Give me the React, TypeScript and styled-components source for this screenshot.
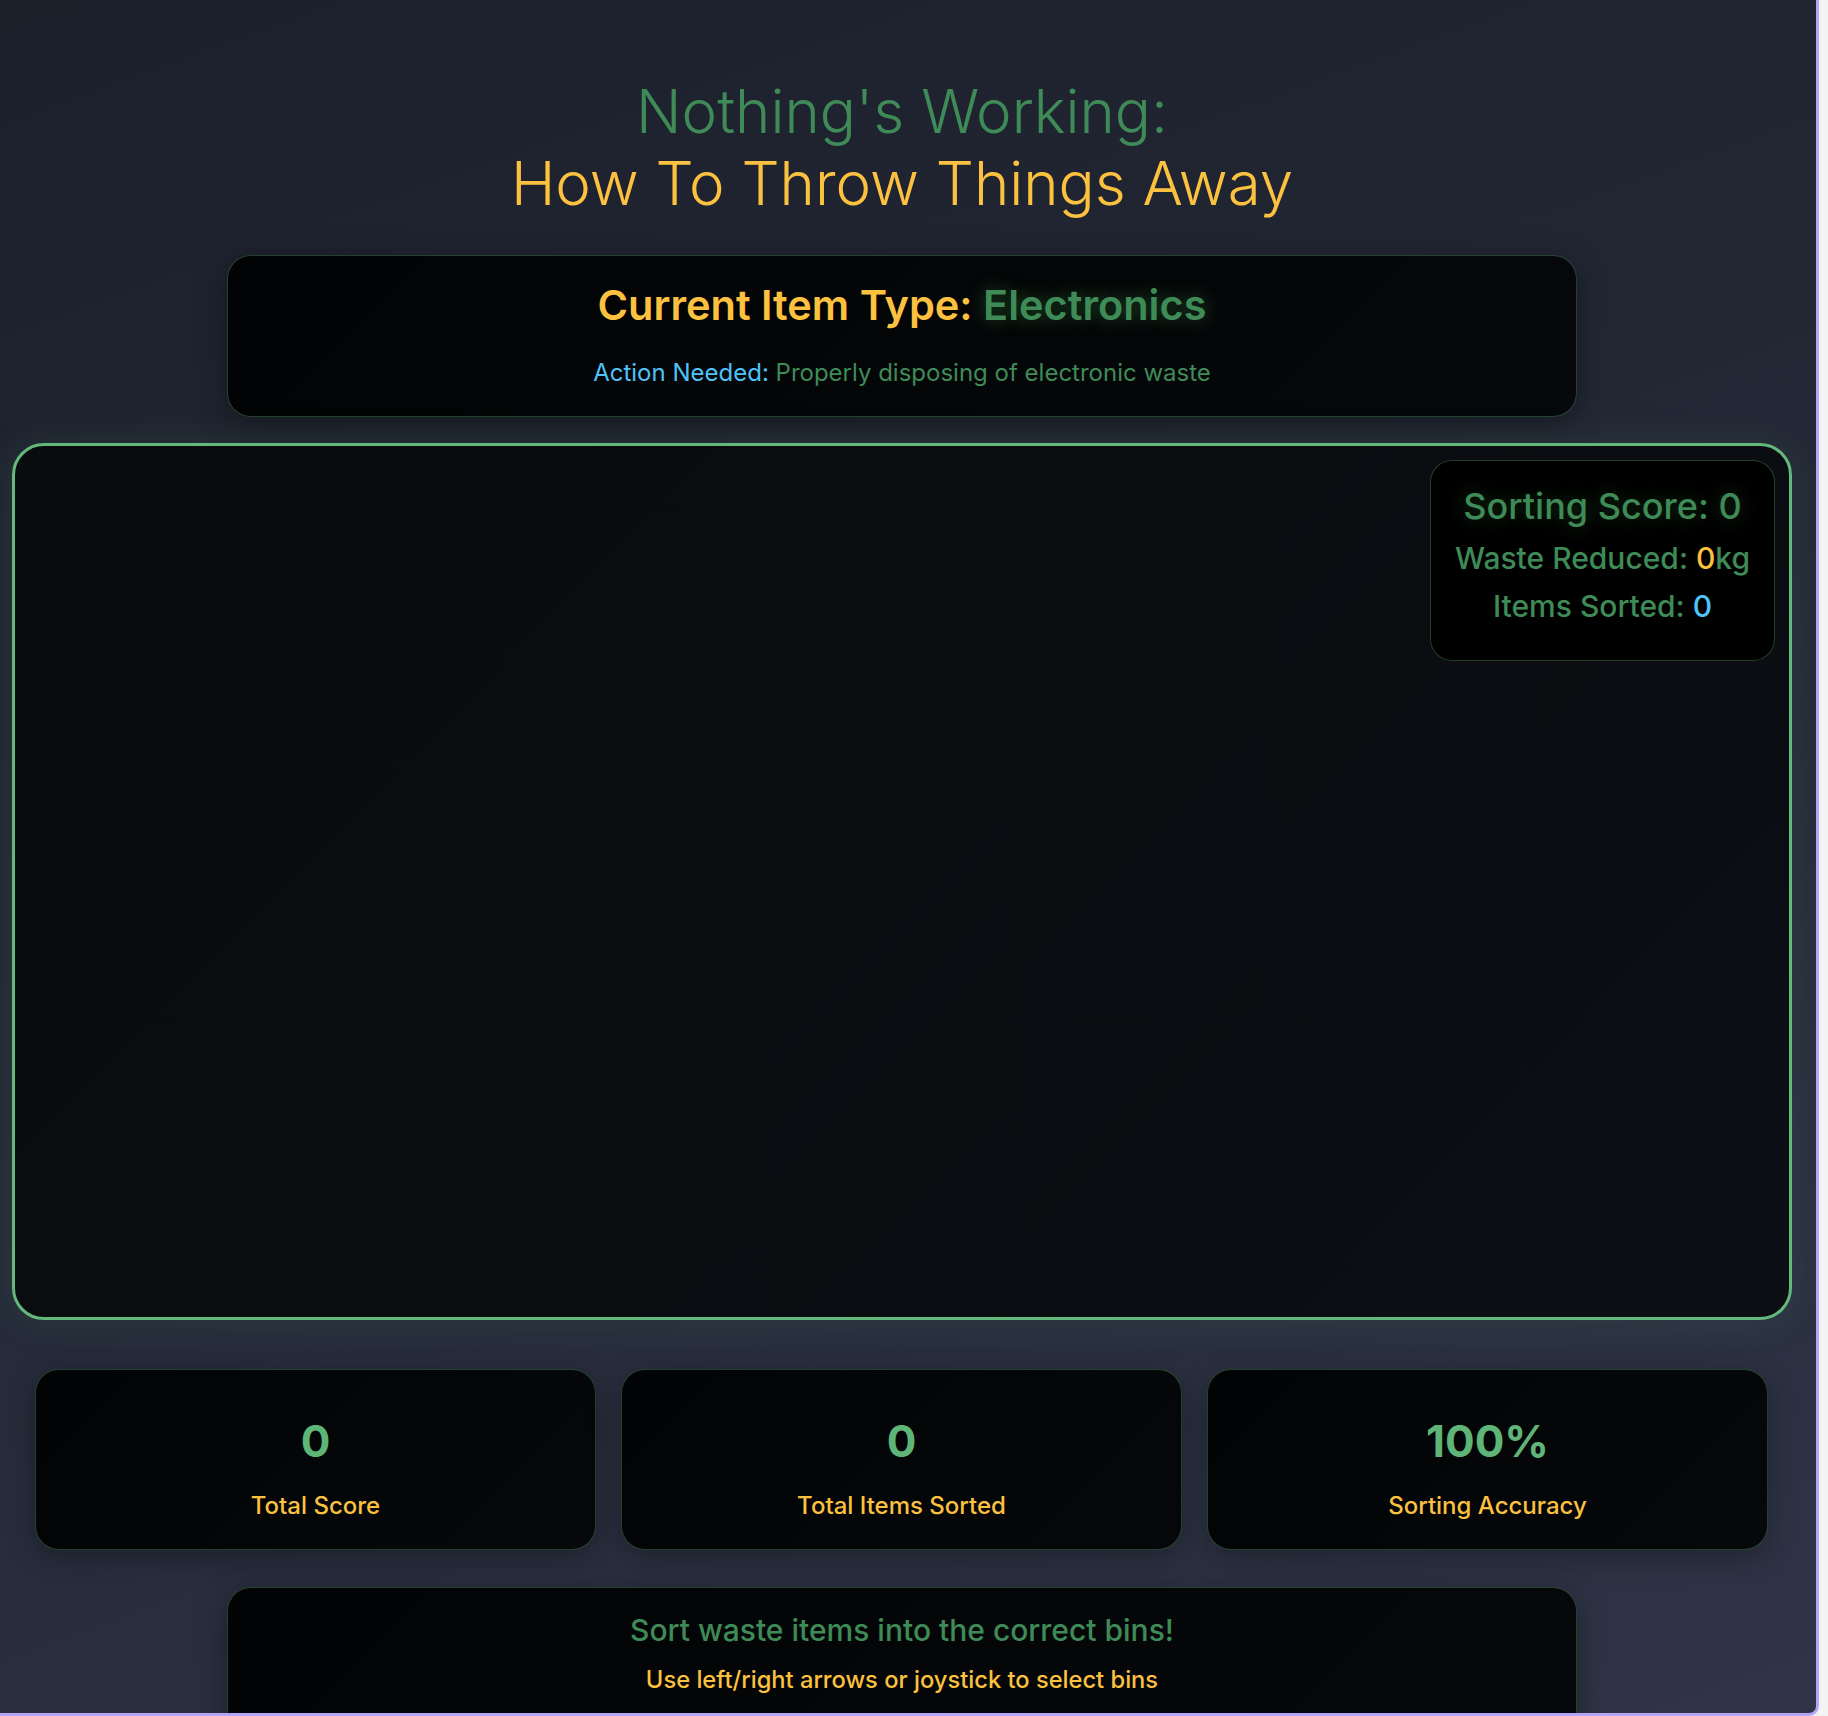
import React from "react";
import styled, { createGlobalStyle } from "styled-components";

const GREEN = "#3f8b57";
const GREEN_LIGHT = "#5fb477";
const YELLOW = "#fbc13f";
const BLUE = "#4fc3f7";
const FONT = `Inter, "Noto Sans", "Liberation Sans", sans-serif`;

const GlobalStyle = createGlobalStyle`
  html, body {
    margin: 0;
    padding: 0;
    background: #f3f3f3;
  }
  body {
    font-family: ${FONT};
  }
  * { box-sizing: border-box; }
`;

const Frame = styled.div`
  width: 1819px;
  height: 1716px;
  overflow: hidden;
  border-right: 3px solid #b3a6f8;
  border-bottom: 3px solid #b3a6f8;
  border-bottom-right-radius: 10px;
  background: linear-gradient(160deg, #1c202b 0%, #232836 45%, #2f3547 100%);
  padding: 0 24px 0 12px;
`;

const Column = styled.main`
  width: 1780px;
  display: flex;
  flex-direction: column;
  align-items: center;
  padding-top: 75px;
`;

const Title = styled.h1`
  margin: 0;
  font-family: ${FONT};
  font-weight: 300;
  font-size: 60px;
  line-height: 72px;
  text-align: center;
`;

const TitleLine = styled.span<{ $color: string }>`
  display: block;
  color: ${(p) => p.$color};
`;

const Panel = styled.section<{ $mt: number }>`
  width: 1350px;
  margin-top: ${(p) => p.$mt}px;
  background: linear-gradient(135deg, #020304 0%, #06080b 100%);
  border: 1px solid rgba(76, 140, 90, 0.45);
  border-radius: 24px;
  box-shadow: 0 8px 30px rgba(0, 0, 0, 0.35);
  text-align: center;
`;

const ItemPanel = styled(Panel)`
  padding: 25px 24px 25px;
`;

const ItemHeading = styled.h2`
  margin: 0 0 26px;
  font-size: 41.5px;
  line-height: 48px;
  font-weight: 600;
  color: ${YELLOW};
`;

const Glow = styled.span<{ $color: string }>`
  color: ${(p) => p.$color};
  text-shadow: 0 0 18px rgba(76, 175, 80, 0.45);
`;

const Tint = styled.span<{ $color: string }>`
  color: ${(p) => p.$color};
`;

const ActionLine = styled.p`
  margin: 0;
  font-size: 24px;
  line-height: 36px;
  font-weight: 400;
  color: ${GREEN};
`;

const GameArea = styled.div`
  position: relative;
  width: 1780px;
  height: 877px;
  margin-top: 26px;
  border: 3px solid #63b97b;
  border-radius: 32px;
  background: linear-gradient(135deg, #090b0f 0%, #0c0e13 100%);
  box-shadow: 0 0 40px rgba(90, 170, 110, 0.12);
`;

const ScorePanel = styled.div`
  position: absolute;
  top: 14px;
  right: 14px;
  width: 345px;
  padding: 23px 10px 30px;
  background: #000;
  border: 1px solid rgba(76, 140, 90, 0.45);
  border-radius: 22px;
  text-align: center;
  font-weight: 500;
  color: ${GREEN};
`;

const ScoreTitle = styled.div`
  font-size: 36px;
  line-height: 44px;
  margin-bottom: 6px;
  text-shadow: 0 0 18px rgba(76, 175, 80, 0.35);
`;

const ScoreLine = styled.div`
  font-size: 30px;
  line-height: 48px;
`;

const StatsRow = styled.div`
  width: 100%;
  margin-top: 49px;
  padding: 0 24px 0 23px;
  display: grid;
  grid-template-columns: repeat(3, 1fr);
  gap: 25px;
`;

const StatCard = styled.div`
  height: 181px;
  padding: 42px 20px 0;
  background: linear-gradient(135deg, #020304 0%, #06080b 100%);
  border: 1px solid rgba(76, 140, 90, 0.45);
  border-radius: 24px;
  box-shadow: 0 8px 30px rgba(0, 0, 0, 0.3);
  text-align: center;
`;

const StatValue = styled.div`
  font-size: 44px;
  line-height: 58px;
  font-weight: 700;
  color: ${GREEN_LIGHT};
`;

const StatLabel = styled.div`
  margin-top: 19px;
  font-size: 24px;
  line-height: 33px;
  font-weight: 500;
  color: ${YELLOW};
`;

const HelpPanel = styled(Panel)`
  height: 170px;
  padding: 24px 24px 0;
`;

const HelpTitle = styled.div`
  font-size: 30px;
  line-height: 36px;
  font-weight: 500;
  color: ${GREEN};
`;

const HelpText = styled.div`
  margin-top: 15px;
  font-size: 23.7px;
  line-height: 33px;
  font-weight: 500;
  color: ${YELLOW};
`;

const stats = [
  { value: "0", label: "Total Score" },
  { value: "0", label: "Total Items Sorted" },
  { value: "100%", label: "Sorting Accuracy" },
];

export default function App() {
  return (
    <>
      <GlobalStyle />
      <Frame>
        <Column>
          <Title>
            <TitleLine $color={GREEN}>Nothing's Working:</TitleLine>
            <TitleLine $color={YELLOW}>How To Throw Things Away</TitleLine>
          </Title>

          <ItemPanel $mt={36}>
            <ItemHeading>
              Current Item Type: <Glow $color={GREEN}>Electronics</Glow>
            </ItemHeading>
            <ActionLine>
              <Tint $color={BLUE}>Action Needed:</Tint> Properly disposing of electronic waste
            </ActionLine>
          </ItemPanel>

          <GameArea>
            <ScorePanel>
              <ScoreTitle>Sorting Score: 0</ScoreTitle>
              <ScoreLine>
                Waste Reduced: <Tint $color={YELLOW}>0</Tint>kg
              </ScoreLine>
              <ScoreLine>
                Items Sorted: <Tint $color={BLUE}>0</Tint>
              </ScoreLine>
            </ScorePanel>
          </GameArea>

          <StatsRow>
            {stats.map((s) => (
              <StatCard key={s.label}>
                <StatValue>{s.value}</StatValue>
                <StatLabel>{s.label}</StatLabel>
              </StatCard>
            ))}
          </StatsRow>

          <HelpPanel $mt={37}>
            <HelpTitle>Sort waste items into the correct bins!</HelpTitle>
            <HelpText>Use left/right arrows or joystick to select bins</HelpText>
          </HelpPanel>
        </Column>
      </Frame>
    </>
  );
}
